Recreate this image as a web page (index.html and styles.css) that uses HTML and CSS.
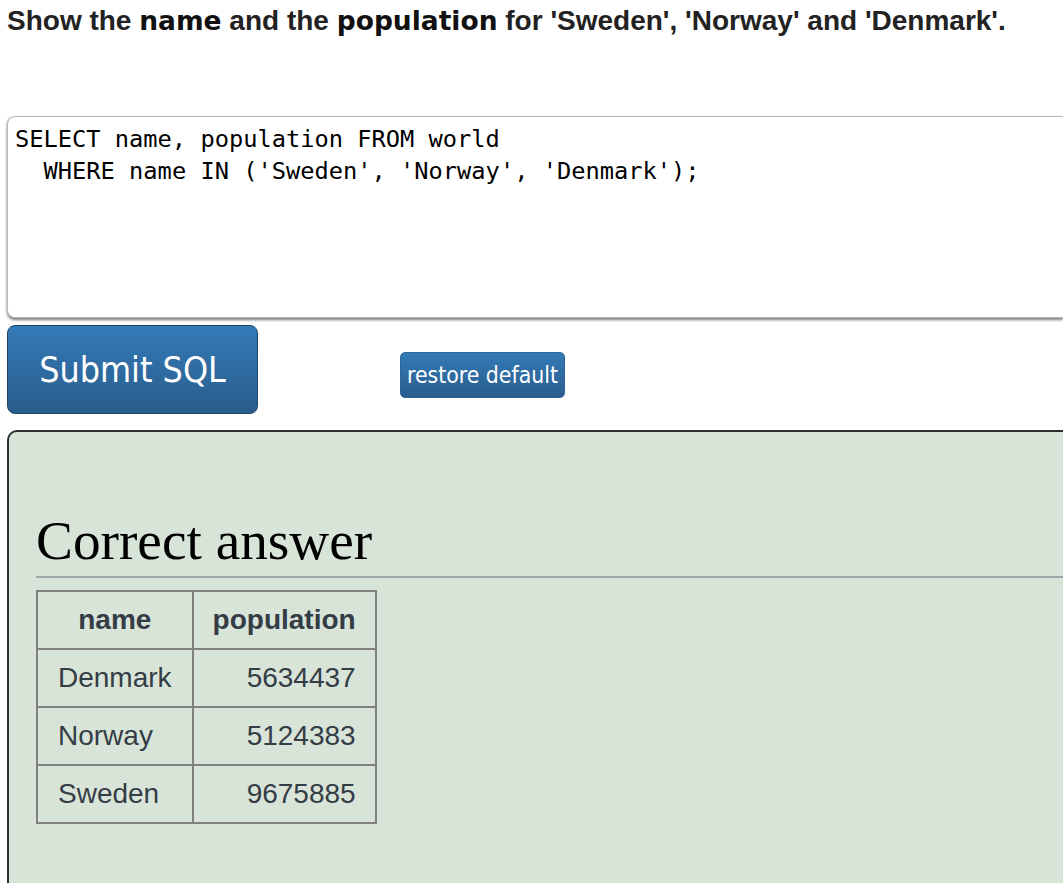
FILE: index.html
```html
<!DOCTYPE html>
<html>
<head>
<meta charset="utf-8">
<link rel="stylesheet" href="styles.css">
</head>
<body>
<div class="page">
  <p class="question">Show the <strong>name</strong> and the <strong>population</strong> for 'Sweden', 'Norway' and 'Denmark'.</p>
  <div class="editor">
    <textarea class="sql" spellcheck="false">SELECT name, population FROM world
  WHERE name IN ('Sweden', 'Norway', 'Denmark');</textarea>
  </div>
  <div class="actions">
    <button class="btn btn-submit">Submit SQL</button>
    <button class="btn btn-restore">restore default</button>
  </div>
  <div class="answer">
    <h2 class="answer-title">Correct answer</h2>
    <table class="result">
      <thead>
        <tr><th>name</th><th>population</th></tr>
      </thead>
      <tbody>
        <tr><td>Denmark</td><td class="num">5634437</td></tr>
        <tr><td>Norway</td><td class="num">5124383</td></tr>
        <tr><td>Sweden</td><td class="num">9675885</td></tr>
      </tbody>
    </table>
  </div>
</div>
</body>
</html>
```

FILE: styles.css
```css
html, body {
  margin: 0;
  padding: 0;
  overflow: hidden;
  background: #ffffff;
}

.page {
  padding-left: 7px;
  font-family: "Liberation Sans", Arial, sans-serif;
}

.question {
  margin: 5px 0 0 0;
  font-size: 28px;
  font-weight: bold;
  line-height: 32px;
  color: #222222;
  white-space: nowrap;
}

.question strong {
  font-family: "DejaVu Sans", "Liberation Sans", sans-serif;
  font-size: 26.5px;
  font-weight: bold;
  color: #111111;
}

.editor {
  margin-top: 79px;
}

.sql {
  display: block;
  box-sizing: border-box;
  width: 100%;
  height: 202px;
  margin: 0;
  padding: 6px 7px 4px 7px;
  border: 1px solid #b8b8b8;
  border-right: none;
  border-radius: 8px 0 0 8px;
  box-shadow: 0 2px 3px #7a7a7a;
  font-family: "DejaVu Sans Mono", "Liberation Mono", monospace;
  font-size: 23.7px;
  line-height: 32px;
  color: #000000;
  resize: none;
  outline: none;
  overflow: hidden;
  background: #ffffff;
}

.actions {
  display: flex;
  align-items: flex-start;
  margin-top: 7px;
}

.btn {
  color: #ffffff;
  font-family: "DejaVu Sans", Verdana, sans-serif;
  font-stretch: condensed;
  background: linear-gradient(to bottom, #337ab7 0%, #2a5d8c 100%);
  cursor: pointer;
  padding: 0;
}

.btn-submit {
  width: 251px;
  height: 89px;
  border: 1px solid #1e4566;
  border-radius: 8px;
  font-size: 35.5px;
}

.btn-restore {
  width: 165px;
  height: 46px;
  margin-top: 27px;
  margin-left: 142px;
  border: 1px solid #2f6497;
  border-radius: 5px;
  font-size: 22.8px;
}

.answer {
  margin-top: 16px;
  box-sizing: border-box;
  min-height: 480px;
  padding: 0 0 0 27px;
  background: #d9e4d9;
  border: 2px solid #2a2f33;
  border-right: none;
  border-radius: 10px 0 0 0;
}

.answer-title {
  margin: 0;
  padding-top: 78px;
  padding-bottom: 4px;
  font-family: "Liberation Serif", Georgia, serif;
  font-weight: normal;
  font-size: 55.3px;
  line-height: 62px;
  color: #000000;
  border-bottom: 2px solid #a0a5a8;
}

.result {
  margin-top: 12px;
  border-collapse: collapse;
  border: 2px solid #808080;
  font-size: 28px;
  color: #343d45;
}

.result th,
.result td {
  border: 2px solid #808080;
  padding: 12px 20px;
  line-height: 32px;
}

.result th {
  font-weight: bold;
  text-align: center;
}

.result td {
  text-align: left;
}

.result th:last-child,
.result td.num {
  padding-left: 19px;
  padding-right: 19px;
}

.result td.num {
  text-align: right;
}
```
